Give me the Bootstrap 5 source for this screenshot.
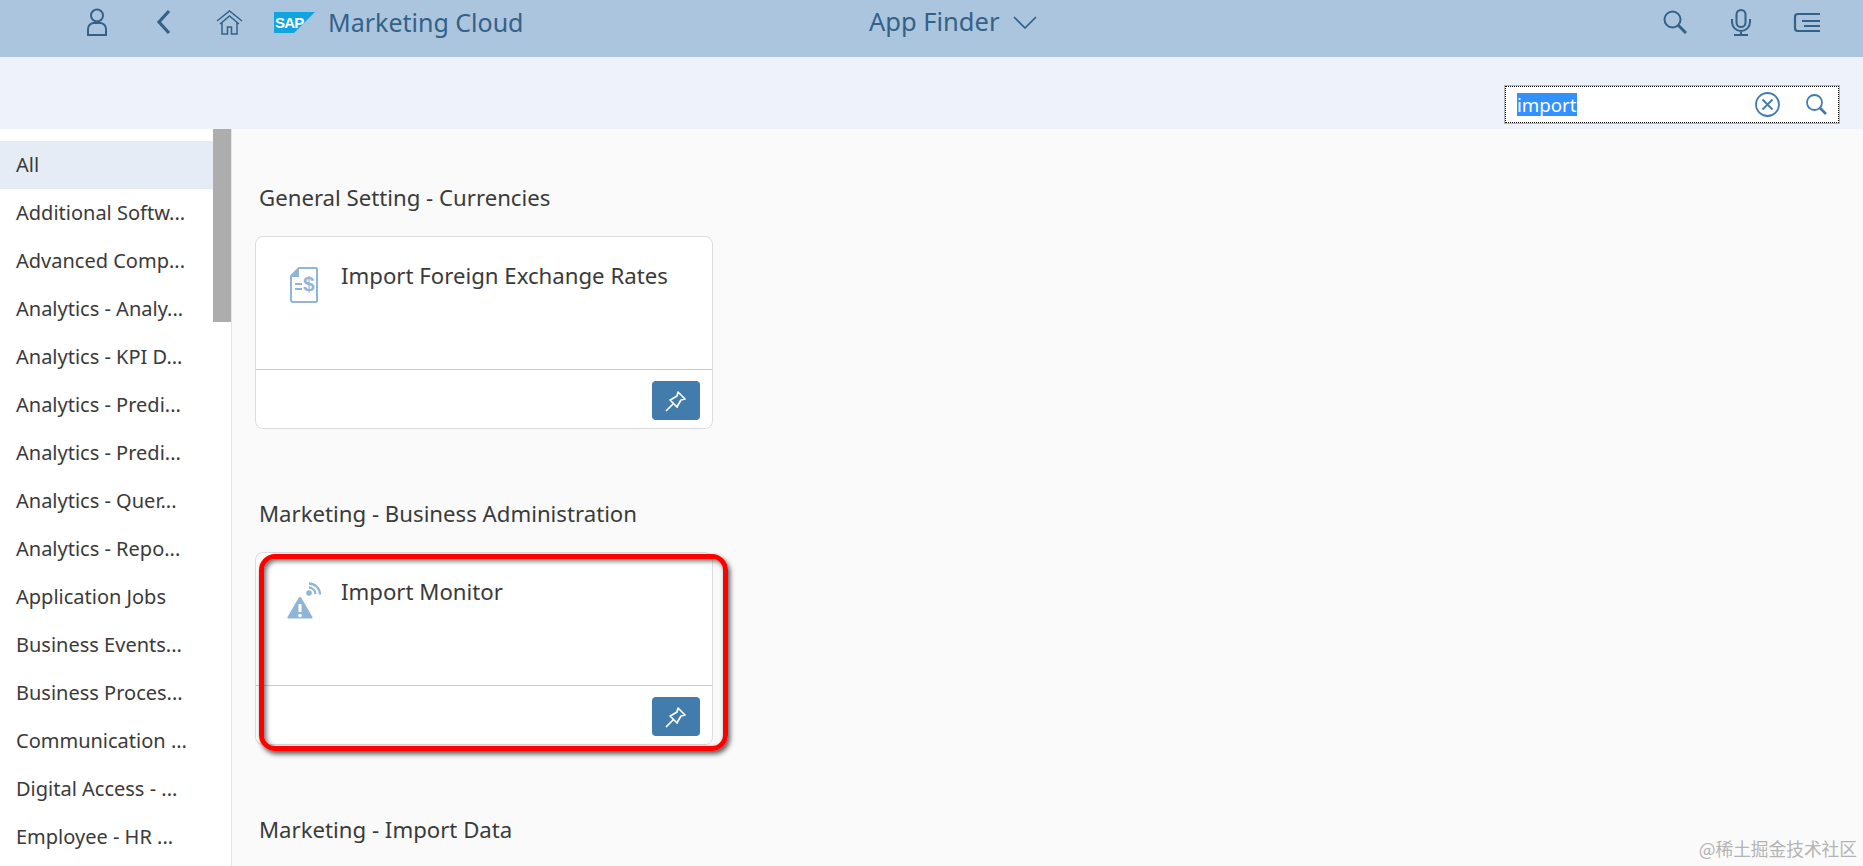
<!DOCTYPE html>
<html lang="en"><head><meta charset="utf-8"><title>App Finder</title>
<link href="https://cdn.jsdelivr.net/npm/bootstrap@5.3.0/dist/css/bootstrap.min.css" rel="stylesheet">
<style>
html,body{height:866px;overflow:hidden}
body{font-family:"Noto Sans","Liberation Sans",sans-serif;background:#fafafa;color:#3a3a3a}
.shell-bar{height:57px;background:#abc5df;color:#346187;padding:0 0 13px 87px}
.shell-bar svg{display:block;flex:none;fill:none;stroke:#346187}
.shell-left{width:782px;flex:none}
.ic-back{margin-left:49px}
.ic-home{margin-left:45px}
.ic-sap{margin-left:31px}
.bar-title{font-size:25px;line-height:1;margin-left:13px}
.app-title{font-size:25.5px;line-height:1}
.shell-mid{width:794px;flex:none;gap:14px}
.ic-mic{margin-left:44px}
.ic-menu{margin-left:42px}
.sap-fill{fill:#0fa5e0;stroke:none}
.sap-text{fill:#fff;stroke:none;font:700 15px "Liberation Sans",sans-serif;letter-spacing:-.8px}
.sub-bar{height:72px;background:#edf2fb;padding:28px 23px 5px 0}
.find-box{width:336px;height:39px;background:#fff;border:1px solid #b5b5b5;outline:1px dotted #000;outline-offset:-2px;padding-left:12px;padding-right:12px;font-size:18.7px}
.find-sel{background:#3390ff;color:#fff;line-height:23px}
.ic-find{margin-left:26px}
.body-wrap{height:737px}
.side-pane{width:232px;background:#fff;border-right:1px solid #e6e6e6;flex:none}
.side-list{width:213px;padding-top:12px}
.side-item{height:48px;line-height:47px;padding-left:16px;font-size:20px;color:#3a3a3a;white-space:nowrap}
.side-item.is-on{background:#e5ecf5}
.side-track{width:18px}
.side-thumb{height:193px;background:#adadad}
.main-pane{padding:55px 0 0 23px;overflow:hidden}
.group-head{font-size:22.2px;line-height:28px;margin:0 0 0 4px;color:#3a3a3a;font-weight:400;white-space:nowrap}
.group{height:316px}
.tile{width:458px;height:193px;margin-top:24px;border:1px solid #dcdcdc;border-radius:8px;background:#fff}
.tile .card-body{height:132px;padding:0;flex:none}
.tile-icon{width:85px;flex:none;padding-top:30px;padding-left:34px}
.tile-icon-b{padding-left:31px}
.tile-icon svg{display:block;overflow:visible}
.tile-title{font-size:22.2px;line-height:30px;padding-top:24px;color:#3a3a3a}
.tile .card-footer{height:59px;background:#fff;border-top:1px solid #ccc;padding:11px 12px 0 0;border-radius:0 0 8px 8px}
.pin-btn{width:48px;height:39px;padding:0;background:#427cac;border:none;border-radius:4px}
.red-frame{position:absolute;left:3px;top:1px;width:469px;height:197px;border:5px solid #f00;border-radius:16px;box-shadow:2px 3px 5px rgba(0,0,0,.65),inset 2px 2px 5px rgba(0,0,0,.6);pointer-events:none}
.watermark{position:absolute;right:6px;bottom:5px;font:17.7px "Noto Sans CJK SC","Noto Sans",sans-serif;color:#b4b4b4}
.ic-dollar{fill:#91b5d9;font:700 21px "Liberation Sans",sans-serif}
</style></head>
<body class="position-relative">
<header class="shell-bar d-flex align-items-center">
 <div class="shell-left d-flex align-items-center">
  <svg width="20" height="28" viewBox="0 0 20 28" stroke-width="2"><circle cx="10" cy="7.500" r="6"/><path d="M1 27v-6a6 6 0 0 1 6-6h6a6 6 0 0 1 6 6v6z"/></svg>
  <svg class="ic-back" width="15" height="26" viewBox="0 0 15 26" stroke-width="3.200"><path d="M13 2 3 13l10 11"/></svg>
  <svg class="ic-home" width="27" height="25" viewBox="0 0 27 25" stroke-width="1.500"><path d="M1 11 13.500 1 26 11M4 14 13.500 6 23 14M6 12v12h5.500v-7h4v7H21V12"/></svg>
  <svg class="ic-sap" width="41" height="21" viewBox="0 0 41 21"><polygon class="sap-fill" points="0,0 41,0 20,21 0,21"/><text class="sap-text" x="1" y="16">SAP</text></svg>
  <span class="bar-title">Marketing Cloud</span>
 </div>
 <div class="shell-mid d-flex align-items-center">
  <span class="app-title">App Finder</span>
  <svg width="24" height="13" viewBox="0 0 24 13" stroke-width="1.700"><path d="M1 1l11 11L23 1"/></svg>
 </div>
 <div class="d-flex align-items-center">
  <svg width="24" height="24" viewBox="0 0 24 24" stroke-width="2"><circle cx="9.500" cy="9.500" r="8"/><path d="M15 15l8 8" stroke-width="3"/></svg>
  <svg class="ic-mic" width="20" height="27" viewBox="0 0 20 27" stroke-width="2"><rect x="5.500" y="1" width="9" height="17" rx="4.500"/><path d="M1 10v3a9 9 0 0 0 18 0v-3M10 22v4M3 26h14"/></svg>
  <svg class="ic-menu" width="28" height="20" viewBox="0 0 28 20" stroke-width="2.200"><path d="M27 2H5a3 3 0 0 0-3 3v11a3 3 0 0 0 3 3h22M9 9h18M11 14h16"/></svg>
 </div>
</header>
<div class="sub-bar d-flex justify-content-end">
 <div class="find-box d-flex align-items-center">
  <span class="find-sel">import</span>
  <svg class="ms-auto" width="25" height="25" viewBox="0 0 25 25" fill="none" stroke="#427cac" stroke-width="1.800"><circle cx="12.500" cy="12.500" r="11.500"/><path d="m7.500 7.500 10 10M17.500 7.500l-10 10"/></svg>
  <svg class="ic-find" width="21" height="21" viewBox="0 0 21 21" fill="none" stroke="#427cac" stroke-width="1.800"><circle cx="8.500" cy="8.500" r="7.500"/><path d="m14 14 6 6" stroke-width="2.600"/></svg>
 </div>
</div>
<div class="body-wrap d-flex">
 <nav class="side-pane d-flex">
  <div class="side-list">
   <div class="side-item is-on">All</div>
   <div class="side-item">Additional Softw...</div>
   <div class="side-item">Advanced Comp...</div>
   <div class="side-item">Analytics - Analy...</div>
   <div class="side-item">Analytics - KPI D...</div>
   <div class="side-item">Analytics - Predi...</div>
   <div class="side-item">Analytics - Predi...</div>
   <div class="side-item">Analytics - Quer...</div>
   <div class="side-item">Analytics - Repo...</div>
   <div class="side-item">Application Jobs</div>
   <div class="side-item">Business Events...</div>
   <div class="side-item">Business Proces...</div>
   <div class="side-item">Communication ...</div>
   <div class="side-item">Digital Access - ...</div>
   <div class="side-item">Employee - HR ...</div>
  </div>
  <div class="side-track"><div class="side-thumb"></div></div>
 </nav>
 <main class="main-pane flex-grow-1">
  <section class="group">
   <h2 class="group-head">General Setting - Currencies</h2>
   <div class="card tile">
    <div class="card-body d-flex">
     <div class="tile-icon"><svg width="28" height="36" viewBox="0 0 28 36" fill="none"><path d="M1 9 9 1h17a1 1 0 0 1 1 1v32a1 1 0 0 1-1 1H3a2 2 0 0 1-2-2z" stroke="#91b5d9" stroke-width="2"/><path d="M1 10 9 1v9z" fill="#91b5d9"/><path d="M5 17h7M5 22h7" stroke="#91b5d9" stroke-width="2"/><text class="ic-dollar" x="13" y="24">$</text></svg></div>
     <div class="tile-title">Import Foreign Exchange Rates</div>
    </div>
    <div class="card-footer d-flex justify-content-end">
     <button class="btn pin-btn d-flex align-items-center justify-content-center" aria-label="Pin"><svg width="22" height="22" viewBox="0 0 22 22" fill="none" stroke="#fff" stroke-width="1.700" stroke-linejoin="round"><path d="M1 21 8 14M13 2l7 7-4 1-3 5-1 2-7-7 2-1 5-3z"/></svg></button>
    </div>
   </div>
  </section>
  <section class="group">
   <h2 class="group-head">Marketing - Business Administration</h2>
   <div class="card tile">
    <div class="card-body d-flex">
     <div class="tile-icon tile-icon-b"><svg width="34" height="36" viewBox="0 0 34 36" fill="none"><path d="M11.500 15 .5 34a1 1 0 0 0 1 1.500h23a1 1 0 0 0 1-1.500L14.500 15a1.700 1.700 0 0 0-3 0z" fill="#91b5d9"/><path d="M13 21v8" stroke="#fff" stroke-width="3"/><circle cx="13" cy="32.500" r="1.800" fill="#fff"/><circle cx="22" cy="10" r="2.800" fill="#91b5d9"/><path d="M22 4.500a7 7 0 0 1 6.500 6.500M22 .5a11 11 0 0 1 11 11" stroke="#91b5d9" stroke-width="2.300"/></svg></div>
     <div class="tile-title">Import Monitor</div>
    </div>
    <div class="card-footer d-flex justify-content-end">
     <button class="btn pin-btn d-flex align-items-center justify-content-center" aria-label="Pin"><svg width="22" height="22" viewBox="0 0 22 22" fill="none" stroke="#fff" stroke-width="1.700" stroke-linejoin="round"><path d="M1 21 8 14M13 2l7 7-4 1-3 5-1 2-7-7 2-1 5-3z"/></svg></button>
    </div>
    <div class="red-frame"></div>
   </div>
  </section>
  <section>
   <h2 class="group-head">Marketing - Import Data</h2>
  </section>
 </main>
</div>
<div class="watermark">@稀土掘金技术社区</div>
<script src="https://cdn.jsdelivr.net/npm/bootstrap@5.3.0/dist/js/bootstrap.bundle.min.js"></script>
</body></html>
